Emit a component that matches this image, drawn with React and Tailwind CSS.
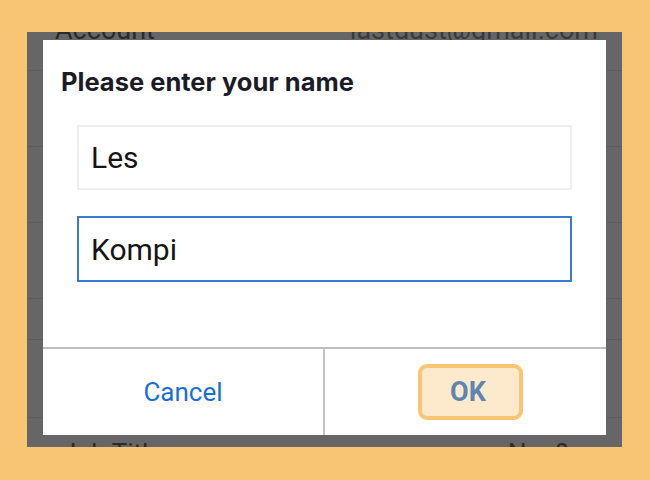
const ROW_HEIGHTS = [39, 76, 76, 76, 41, 78]

function BackdropList() {
  return (
    <div className="flex flex-col">
      <div className="flex h-[39px] items-start justify-between overflow-hidden border-b border-[#5d5d5d] pl-[28px] pr-[24px]">
        <span className="-mt-[15px] text-[27px] leading-none text-[#2a2a2a]">Account</span>
        <span className="-mt-[15px] text-[27px] leading-none text-[#3a3a3a]">lastdust@gmail.com</span>
      </div>
      {ROW_HEIGHTS.slice(1).map((h, i) => (
        <div key={i} className="border-b border-[#5d5d5d]" style={{ height: h }} />
      ))}
      <div className="flex justify-between pl-[35px] pr-[54px] pt-[22px]">
        <span className="text-[26px] leading-none text-[#2a2a2a]">Job Title</span>
        <span className="text-[26px] leading-none text-[#2a2a2a]">Non?</span>
      </div>
    </div>
  )
}

function NameDialog() {
  return (
    <div className="absolute left-[16px] top-[8px] flex h-[395px] w-[563px] flex-col bg-white">
      <h1 className="pl-[18px] pt-[26px] font-['Inter',sans-serif] text-[25.5px] font-bold leading-[32px] text-[#1c1c28]">
        Please enter your name
      </h1>
      <div className="flex flex-1 flex-col gap-[26px] px-[34px] pt-[27px]">
        <div className="flex h-[65px] items-center border-2 border-[#efefef] px-[12px] text-[30px] text-[#151515]">
          Les
        </div>
        <div className="flex h-[66px] items-center border-2 border-[#3a7bd0] px-[12px] text-[30px] text-[#151515]">
          Kompi
        </div>
      </div>
      <div className="flex h-[88px] border-t-2 border-[#bdbdbd]">
        <button className="flex w-[280px] items-center justify-center text-[26px] text-[#1a6ed8]">
          Cancel
        </button>
        <div className="w-[2px] bg-[#c4c4c4]" />
        <div className="flex flex-1 items-center justify-center pl-[9px]">
          <button className="flex h-[56px] w-[105px] items-center justify-center rounded-[9px] border-[4px] border-[#f8c573] bg-[#fde9cb] pr-[4px] text-[27px] font-bold text-[#5d86b3]">
            OK
          </button>
        </div>
      </div>
    </div>
  )
}

export default function App() {
  return (
    <div className="h-[480px] w-[650px] bg-[#f8c573] pl-[27px] pr-[28px] pt-[32px] font-['Roboto',sans-serif]">
      <div className="relative h-[415px] overflow-hidden bg-[#666666]">
        <BackdropList />
        <NameDialog />
      </div>
    </div>
  )
}
